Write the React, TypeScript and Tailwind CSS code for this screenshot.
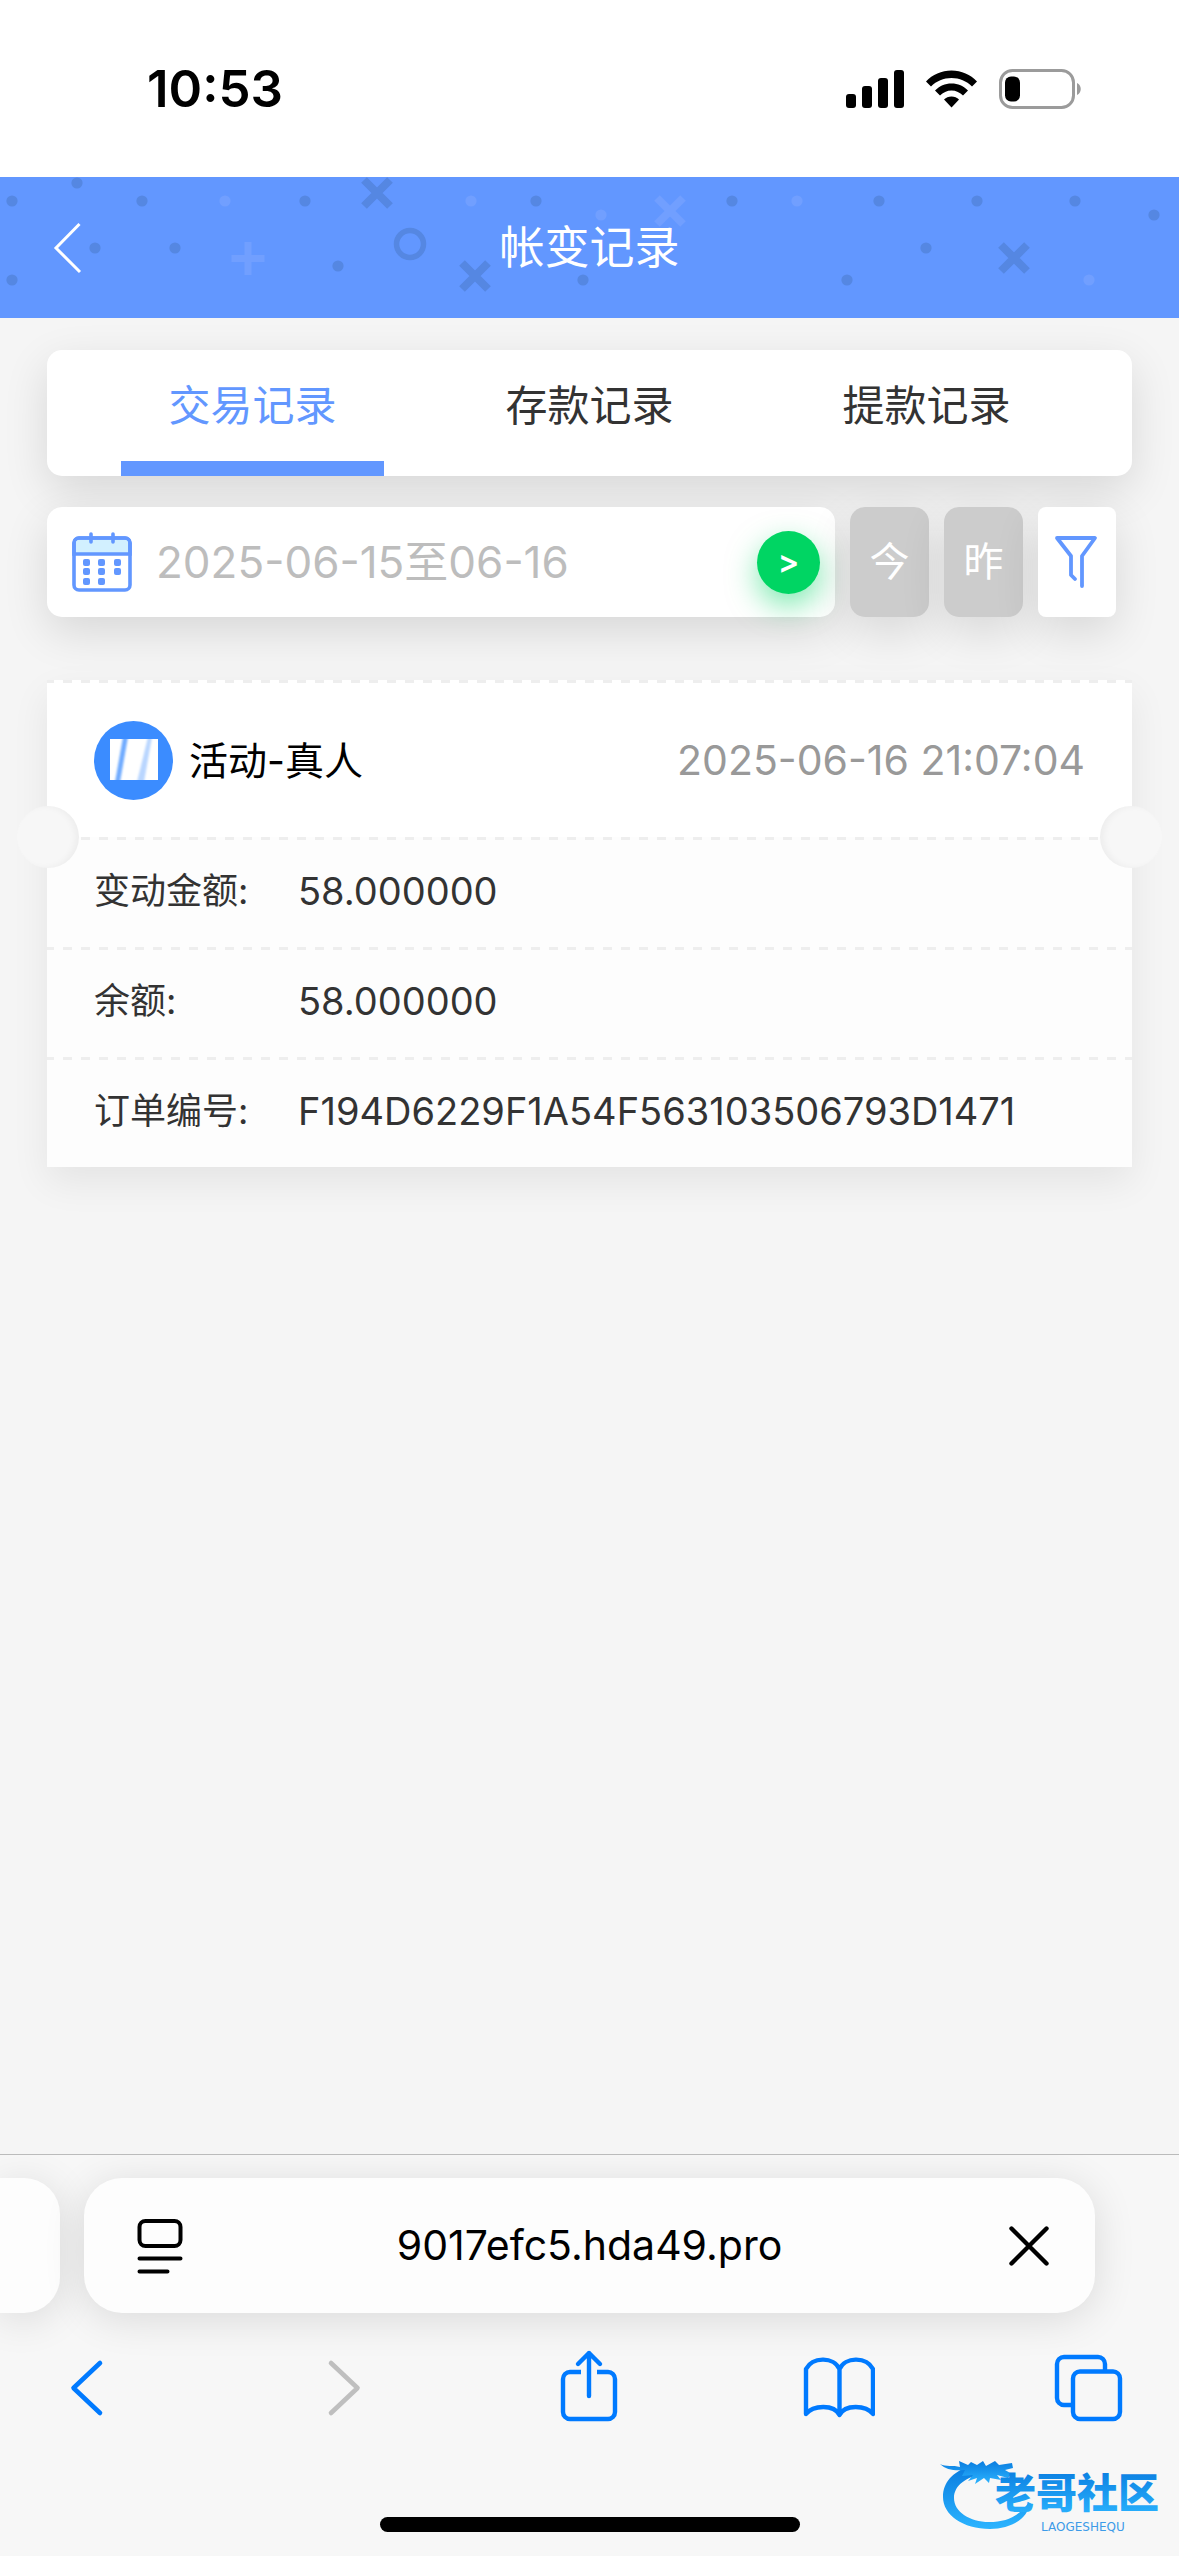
import { useState } from "react";

const TABS = ["交易记录", "存款记录", "提款记录"];

const RECORD = {
  title: "活动-真人",
  time: "2025-06-16 21:07:04",
  rows: [
    { label: "变动金额:", value: "58.000000" },
    { label: "余额:", value: "58.000000" },
    { label: "订单编号:", value: "F194D6229F1A54F563103506793D1471" },
  ],
};

// header confetti, in header pixels
const DARK_DOTS = [
  [77, 6], [12, 24], [142, 24], [305, 24], [536, 24], [95, 71], [175, 71], [338, 89], [12, 103], [583, 103],
  [732, 24], [879, 24], [977, 24], [1075, 24], [1154, 38], [926, 71], [847, 103],
];
const LIGHT_DOTS = [[225, 24], [471, 24], [601, 38], [797, 24], [1089, 103]];
const DARK_CROSSES = [[377, 16], [475, 99], [1014, 81]];

function HeaderPattern() {
  return (
    <svg className="absolute inset-0 w-full h-full" viewBox="0 0 1179 141" preserveAspectRatio="xMidYMid slice" aria-hidden="true">
      <g fill="#5587e2">
        {DARK_DOTS.map(([x, y]) => <circle key={`${x}-${y}`} cx={x} cy={y} r="5.6" />)}
      </g>
      <g fill="#719fff">
        {LIGHT_DOTS.map(([x, y]) => <circle key={`${x}-${y}`} cx={x} cy={y} r="5.6" />)}
      </g>
      <g stroke="#5587e2" strokeWidth="8" fill="none">
        {DARK_CROSSES.map(([x, y]) => <path key={x} d={`M${x - 13} ${y - 13}l26 26m0-26l-26 26`} />)}
        <circle cx="410" cy="67" r="13.5" strokeWidth="5.5" />
      </g>
      <g stroke="#719fff" fill="none">
        <path d="M657 21l26 26m0-26l-26 26" strokeWidth="8" />
        <path d="M248 65v33M231.500 81.500h33" strokeWidth="7" />
      </g>
    </svg>
  );
}

function StatusBar() {
  return (
    <div className="h-[177px] bg-white flex items-center justify-between pl-[147px] pr-[97px]">
      <span className="text-[51px] leading-none font-semibold text-black">10:53</span>
      <div className="flex items-center gap-[22px]">
        <svg width="58" height="38" viewBox="0 0 58 38" aria-hidden="true">
          <rect x="0" y="24" width="10" height="14" rx="3" />
          <rect x="16" y="16" width="10" height="22" rx="3" />
          <rect x="32" y="8" width="10" height="30" rx="3" />
          <rect x="48" y="0" width="10" height="38" rx="3" />
        </svg>
        <svg width="51" height="38" viewBox="0 0 51 38" aria-hidden="true">
          <path d="M0 11.500C6.500 4.500 15.500.5 25.500.5S44.500 4.500 51 11.500L46 16.500C40.500 11 33.500 8 25.500 8S10.500 11 5 16.500Z" />
          <path d="M9 20.500C13.500 16 19 13.500 25.500 13.500S37.500 16 42 20.500L37 25.500C34 22.500 30 20.500 25.500 20.500S17 22.500 14 25.500Z" />
          <path d="M18 29.500C20 27.500 22.500 26.500 25.500 26.500S31 27.500 33 29.500L25.500 37.500Z" />
        </svg>
        <svg width="83" height="40" viewBox="0 0 83 40" aria-hidden="true">
          <rect x="1.500" y="1.500" width="73" height="37" rx="12" fill="none" stroke="#9b9b9b" strokeWidth="3" />
          <path d="M78 14c5 2 5 10 0 12z" fill="#9b9b9b" />
          <rect x="6" y="7.500" width="15" height="25" rx="6" />
        </svg>
      </div>
    </div>
  );
}

function CalendarIcon() {
  return (
    <svg className="shrink-0" width="60" height="60" viewBox="0 0 60 60" fill="none" stroke="#6297ff" strokeWidth="3.600" aria-hidden="true">
      <path d="M2 22V11a5 5 0 0 1 5-5h46a5 5 0 0 1 5 5v11z" fill="#d2f0ff" />
      <rect x="2" y="6" width="56" height="52" rx="5" />
      <path d="M19 2v8M41 2v8" strokeLinecap="round" />
      <g fill="#6297ff" stroke="none">
        {[[11, 27], [26, 27], [42, 27], [11, 36], [26, 36], [42, 36], [11, 46], [26, 46]].map(([x, y]) => (
          <rect key={`${x}-${y}`} x={x} y={y} width="7" height="7" rx="2" />
        ))}
      </g>
    </svg>
  );
}

function Dashes() {
  return <div className="h-[3px] bg-[repeating-linear-gradient(90deg,#eeeeee_0_7px,transparent_7px_16px,#eeeeee_16px_18px)]" />;
}

function RecordCard() {
  return (
    <article className="mt-[63px] bg-white shadow-[0_15px_36px_rgba(0,0,0,0.07)]">
      <header className="relative">
        <Dashes />
        <div className="h-[154px] px-[47px] flex items-center">
          <svg className="shrink-0" width="79" height="79" viewBox="0 0 79 79" aria-hidden="true">
            <defs>
              <filter id="soft" x="-20%" y="-20%" width="140%" height="140%"><feGaussianBlur stdDeviation="1.200" /></filter>
              <clipPath id="tile"><rect x="16" y="18" width="48" height="41" /></clipPath>
            </defs>
            <circle cx="39.500" cy="39.500" r="39.500" fill="#3b8cff" />
            <rect x="16" y="18" width="48" height="41" fill="#fff" />
            <g clipPath="url(#tile)">
              <g filter="url(#soft)">
                <path d="M29 16h5l-8 45h-5z" fill="#6fabff" />
                <path d="M54 16h4l-8 45h-7z" fill="#b9d6ff" />
              </g>
            </g>
          </svg>
          <h2 className="ml-4 text-[39px] leading-none text-black">{RECORD.title}</h2>
          <time className="ml-auto text-[41px] leading-none text-[#999999]">{RECORD.time}</time>
        </div>
        <span className="absolute z-10 -left-[30px] -bottom-[31px] size-[62px] rounded-full bg-[#f7f7f7] shadow-[inset_-4px_0_6px_rgba(0,0,0,0.04)]" />
        <span className="absolute z-10 -right-[30px] -bottom-[31px] size-[62px] rounded-full bg-[#f7f7f7] shadow-[inset_4px_0_6px_rgba(0,0,0,0.04)]" />
      </header>
      <dl className="bg-[#fdfdfd] text-[#333333]">
        {RECORD.rows.map((row) => (
          <div key={row.label}>
            <Dashes />
            <div className="h-[107px] px-[47px] pb-1.5 flex items-center leading-none">
              <dt className="w-[204px] shrink-0 text-[36px]">{row.label}</dt>
              <dd className="text-[38px]">{row.value}</dd>
            </div>
          </div>
        ))}
      </dl>
    </article>
  );
}

function BrowserBar() {
  return (
    <footer className="relative border-t border-[#bbbbbb] bg-[#f7f7f7] pt-[23px] pb-6 overflow-hidden">
      <div className="flex gap-6 pr-[84px]">
        <div className="w-[60px] h-[135px] rounded-r-[36px] bg-[#fdfdfd] shadow-[0_6px_42px_rgba(0,0,0,0.12)]" />
        <div className="flex-1 min-w-0 h-[135px] rounded-[38px] bg-[#fdfdfd] shadow-[0_6px_42px_rgba(0,0,0,0.12)] flex items-center pl-12 pr-9">
          <button type="button" aria-label="页面菜单" className="w-14 flex justify-center">
            <svg width="46" height="56" viewBox="0 0 46 56" fill="none" stroke="#000" strokeWidth="4" strokeLinecap="round" aria-hidden="true">
              <rect x="2.500" y="3" width="41" height="25" rx="6" />
              <path d="M2.500 40.500h41M2.500 53.500h28" />
            </svg>
          </button>
          <input readOnly value="9017efc5.hda49.pro" aria-label="网址" className="flex-1 min-w-0 text-center text-[41px] text-black outline-none" />
          <button type="button" aria-label="停止加载" className="w-[68px] flex justify-end pr-2.5">
            <svg width="40" height="40" viewBox="0 0 40 40" stroke="#000" strokeWidth="4.400" strokeLinecap="round" aria-hidden="true">
              <path d="M2.500 2.500l35 35M37.500 2.500l-35 35" />
            </svg>
          </button>
        </div>
      </div>

      <nav className="mt-9 pl-[51px] pr-[54px] flex justify-between text-[#007aff]">
        <button type="button" aria-label="后退">
          <svg width="72" height="78" viewBox="0 0 72 78" fill="none" stroke="currentColor" strokeWidth="4.600" strokeLinecap="round" strokeLinejoin="round" aria-hidden="true">
            <path d="M49 14L22.500 39 49 64" />
          </svg>
        </button>
        <button type="button" aria-label="前进" disabled className="text-[#bfbfbf]">
          <svg width="72" height="78" viewBox="0 0 72 78" fill="none" stroke="currentColor" strokeWidth="4.600" strokeLinecap="round" strokeLinejoin="round" aria-hidden="true">
            <path d="M29 14l26.500 25L29 64" />
          </svg>
        </button>
        <button type="button" aria-label="分享">
          <svg width="72" height="78" viewBox="0 0 72 78" fill="none" stroke="currentColor" strokeWidth="4.400" aria-hidden="true">
            <path d="M29 23H18a7 7 0 0 0-7 7v33a7 7 0 0 0 7 7h38a7 7 0 0 0 7-7V30a7 7 0 0 0-7-7H45" />
            <path d="M37 47V4M26 15L37 4l11 11" strokeLinecap="round" strokeLinejoin="round" />
          </svg>
        </button>
        <button type="button" aria-label="书签">
          <svg width="72" height="78" viewBox="0 0 72 78" fill="none" stroke="currentColor" strokeWidth="4.400" strokeLinejoin="round" aria-hidden="true">
            <path d="M36.500 20C31 8 10 7 3 20v45C10 56 31 55 36.500 66C42 55 63 56 70 65V20C63 7 42 8 36.500 20zV66" />
          </svg>
        </button>
        <button type="button" aria-label="标签页">
          <svg width="72" height="78" viewBox="0 0 72 78" fill="none" stroke="currentColor" strokeWidth="4.400" aria-hidden="true">
            <rect x="20" y="22.500" width="47" height="47.500" rx="7" />
            <path d="M52 22.500V15a7 7 0 0 0-7-7H11a7 7 0 0 0-7 7v34a7 7 0 0 0 7 7h9" />
          </svg>
        </button>
      </nav>

      <div className="mt-[90px] mx-auto w-[420px] h-[15px] rounded-full bg-black" />

      <svg className="absolute right-1 bottom-5" width="240" height="84" viewBox="0 0 240 84" role="img" aria-label="老哥社区">
        <defs>
          <linearGradient id="swoosh" x1="0" y1="0" x2="0" y2="1">
            <stop offset="0" stopColor="#0a7de0" />
            <stop offset="1" stopColor="#2bb4ff" />
          </linearGradient>
        </defs>
        <g fill="url(#swoosh)">
          <path d="M94 50C95 66 76 77 55 77C28 77 8 63 8 45C8 30 18 20 33 15L50 22C32 24 19 33 19 46C19 60 35 70 54 70C74 70 86 62 94 50Z" />
          <path d="M5 12C11 15 18 13 25 15L24 9L33 13L36 10L42 13L48 9L51 14L60 9L64 13L77 11L78 16L70 18L77 22L73 26L62 23L66 28L55 26L54 31L49 26L40 32L42 26L33 29L38 23L27 24L30 18C20 19 11 18 5 12Z" />
          <text x="60" y="56" fontSize="41" fontWeight="900">老哥社区</text>
        </g>
        <text x="106" y="79" fontSize="12" fill="#3d9be8" className="font-['DejaVu_Sans',sans-serif]">LAOGESHEQU</text>
      </svg>
    </footer>
  );
}

export default function App() {
  const [tab, setTab] = useState(0);

  return (
    <div className="min-h-screen flex flex-col bg-[#f5f5f5] font-['Inter','Noto_Sans_CJK_SC',sans-serif]">
      <StatusBar />

      <header className="relative h-[141px] bg-[#6297ff] flex items-center justify-center">
        <HeaderPattern />
        <button type="button" aria-label="返回" className="absolute left-[51px]">
          <svg width="32" height="52" viewBox="0 0 32 52" fill="none" stroke="#fff" strokeWidth="3" aria-hidden="true">
            <path d="M28.500 2L5 26l24 24" />
          </svg>
        </button>
        <h1 className="relative text-[45px] leading-none text-white">帐变记录</h1>
      </header>

      <main className="flex-1 px-[47px] pt-8">
        <div role="tablist" className="h-[126px] px-[37px] flex rounded-[15px] bg-white shadow-[0_15px_45px_rgba(0,0,0,0.12)]">
          {TABS.map((name, i) => (
            <button
              key={name}
              type="button"
              role="tab"
              aria-selected={i === tab}
              onClick={() => setTab(i)}
              className={`flex-1 flex flex-col items-center text-[42px] leading-none ${i === tab ? "text-[#6297ff]" : "text-[#333333]"}`}
            >
              <span className="flex-1 flex items-center">{name}</span>
              <span className={`h-[15px] w-[263px] ${i === tab ? "bg-[#6297ff]" : ""}`} />
            </button>
          ))}
        </div>

        <div className="mt-[31px] mr-4 flex gap-[15px] h-[110px]">
          <div className="flex-1 min-w-0 pl-[25px] pr-[11px] flex items-center rounded-[15px] bg-white shadow-[0_15px_45px_rgba(0,0,0,0.12)]">
            <CalendarIcon />
            <input readOnly value="2025-06-15至06-16" aria-label="日期范围" className="ml-6 flex-1 min-w-0 text-[44px] text-[#bdbdbd] outline-none" />
            <button type="button" aria-label="查询" className="shrink-0 mr-1 size-[63px] rounded-full bg-[#00d563] text-white text-[32px] leading-none font-semibold shadow-[0_12px_30px_rgba(0,213,99,0.5)]">&gt;</button>
          </div>
          <button type="button" className="w-[79px] rounded-[15px] bg-[#cccccc] text-white text-[40px] leading-none shadow-[0_15px_45px_rgba(0,0,0,0.12)]">今</button>
          <button type="button" className="w-[79px] rounded-[15px] bg-[#cccccc] text-white text-[40px] leading-none shadow-[0_15px_45px_rgba(0,0,0,0.12)]">昨</button>
          <button type="button" aria-label="筛选" className="w-[78px] rounded-[8px] bg-white flex items-center justify-center shadow-[0_15px_45px_rgba(0,0,0,0.12)]">
            <svg width="46" height="52" viewBox="0 0 46 52" fill="none" stroke="#6297ff" strokeWidth="3.800" strokeLinecap="round" strokeLinejoin="round" aria-hidden="true">
              <path d="M28 50V20L41 2H3L17 20V39L21 43" />
            </svg>
          </button>
        </div>

        <RecordCard />
      </main>

      <BrowserBar />
    </div>
  );
}
